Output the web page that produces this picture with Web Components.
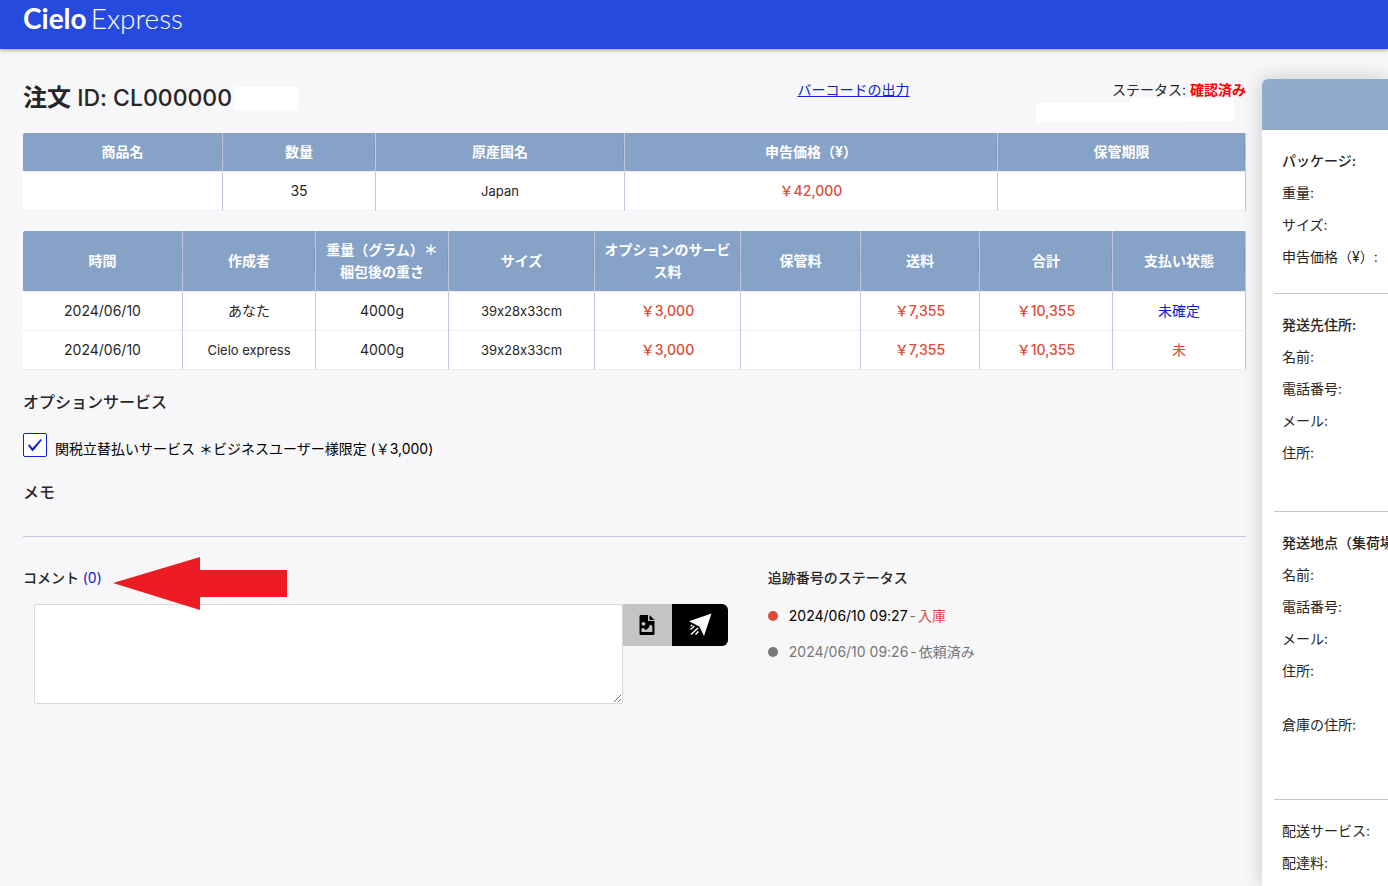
<!DOCTYPE html>
<html lang="ja">
<head>
<meta charset="utf-8">
<meta name="viewport" content="width=device-width, initial-scale=1">
<title>Cielo Express</title>
<style>
  :root {
    --blue: #264add; --link: #1020cc; --red: #dd4b39; --steel: #86a2c7; --line: #c3c4de;
    --text: #262626; --page: #f7f7f9;
  }
  body {
    margin: 0; background: var(--page); color: var(--text);
    font: 14px/22px Inter, "Noto Sans CJK JP", sans-serif;
    font-feature-settings: "calt" 0;
  }
</style>
</head>
<body>
<order-page>
  <app-header slot="header"></app-header>
  <order-heading number="CL000000"></order-heading>
  <data-table id="goods"></data-table>
  <data-table id="quotes"></data-table>
  <service-options>関税立替払いサービス ＊ビジネスユーザー様限定 (￥3,000)</service-options>
  <bottom-area>
    <comment-box count="0"></comment-box>
    <track-status slot="side">
      <track-event active when="2024/06/10 09:27">入庫</track-event>
      <track-event when="2024/06/10 09:26">依頼済み</track-event>
    </track-status>
  </bottom-area>
  <info-panel slot="aside">
    <info-group label="パッケージ:" rows="重量:|サイズ:|申告価格（¥）:"></info-group>
    <info-group label="発送先住所:" rows="名前:|電話番号:|メール:|住所:" extra="value"></info-group>
    <info-group label="発送地点（集荷場" rows="名前:|電話番号:|メール:|住所:||倉庫の住所:" extra="address"></info-group>
    <info-group rows="配送サービス:|配達料:"></info-group>
  </info-panel>
</order-page>
<script>
const tables = {
  goods: {
    widths: [200, 153, 249, 373, 248],
    heads: ['商品名', '数量', '原産国名', '申告価格（¥）', '保管期限'],
    rows: [['', '35', ['latin', 'Japan'], ['money', '￥42,000'], '']]
  },
  quotes: {
    widths: [160, 133, 133, 146, 146, 120, 119, 133, 133],
    heads: ['時間', '作成者', '重量（グラム）＊<br>梱包後の重さ', 'サイズ', 'オプションのサービス料', '保管料', '送料', '合計', '支払い状態'],
    rows: [
      ['2024/06/10', 'あなた', '4000g', ['latin', '39x28x33cm'], ['money', '￥3,000'], '', ['money', '￥7,355'], ['money', '￥10,355'], ['link', '未確定']],
      ['2024/06/10', ['latin', 'Cielo express'], '4000g', ['latin', '39x28x33cm'], ['money', '￥3,000'], '', ['money', '￥7,355'], ['money', '￥10,355'], ['warn', '未']]
    ]
  }
};

const define = (name, html, setup) => {
  const tpl = document.createElement('template');
  tpl.innerHTML = html;
  customElements.define(name, class extends HTMLElement {
    constructor() {
      super();
      this.attachShadow({ mode: 'open' }).append(tpl.content.cloneNode(true));
    }
    connectedCallback() { if (setup) setup(this, this.shadowRoot); }
  });
};

define('order-page', `
<style>
  :host { display: flex; flex-direction: column; min-height: 100vh; overflow-x: clip; }
  .cols { flex: 1; display: grid; grid-template-columns: minmax(0, 1fr) 126px; gap: 16px; padding: 30px 0 0 23px; }
  main { display: flex; flex-direction: column; }
  aside { display: flex; min-width: 0; }
</style>
<slot name="header"></slot>
<div class="cols"><main><slot></slot></main><aside><slot name="aside"></slot></aside></div>`);

define('app-header', `
<style>
  :host { display: block; background: var(--blue); box-shadow: 0 1px 4px rgba(0,0,0,.4); }
  header { height: 49px; padding: 0 23px; }
  a { display: flex; gap: 4px; color: #fff; text-decoration: none; font: 300 28px/36px Lato, sans-serif; }
  b { font-weight: 700; }
</style>
<header><a href="#"><b>Cielo</b><span>Express</span></a></header>`);

define('order-heading', `
<style>
  :host { display: grid; grid-template-columns: 19fr 11fr; height: 54px; }
  h1 { margin: 0; display: flex; align-items: center; height: 38px; font-size: 23px; line-height: 38px; font-weight: 500; white-space: nowrap; }
  h1 b { font-size: 24px; font-weight: 700; }
  .mask { background: #fff; }
  h1 .mask { width: 64px; height: 23px; margin-left: 2px; }
  .right { display: flex; justify-content: space-between; align-items: flex-start; }
  a { color: var(--link); }
  .status { display: flex; flex-direction: column; align-items: flex-end; }
  .status b { color: red; font-weight: 700; }
  .status .mask { width: 198px; height: 24px; margin: -3px 12px 0 0; clip-path: polygon(0 5px, 94px 5px, 94px 0, 100% 0, 100% 23px, 150px 23px, 150px 100%, 0 100%); }
</style>
<h1><span><b>注文</b> ID: <span class="no"></span></span><i class="mask"></i></h1>
<div class="right"><a href="#">バーコードの出力</a>
<div class="status"><div>ステータス: <b>確認済み</b></div><div class="mask"></div></div></div>`,
(el, root) => { root.querySelector('.no').textContent = el.getAttribute('number'); });

define('data-table', `
<style>
  :host { display: block; margin-bottom: 20px; }
  table { width: 100%; table-layout: fixed; border-collapse: separate; border-spacing: 0; background: #fff; border-radius: 2px 2px 0 0; overflow: hidden; }
  th, td { padding: 8px; text-align: center; border-right: 1px solid var(--line); border-bottom: 1px solid #ededf2; height: 22px; }
  th { background: linear-gradient(rgba(0,0,0,.06), rgba(0,0,0,.06)) no-repeat right center / 1px 22px var(--steel); color: #fff; font-weight: 700; }
  .money { color: var(--red); font-weight: 500; }
  .latin { font-size: 13px; }
  .link { color: var(--link); }
  .warn { color: var(--red); }
</style>
<table><colgroup></colgroup><thead><tr></tr></thead><tbody></tbody></table>`,
(el, root) => {
  const { widths, heads, rows } = tables[el.id];
  const total = widths.reduce((a, b) => a + b);
  root.querySelector('colgroup').innerHTML = widths.map(w => `<col style="width:${w / total * 100}%">`).join('');
  root.querySelector('thead tr').innerHTML = heads.map(h => `<th scope="col">${h}</th>`).join('');
  root.querySelector('tbody').innerHTML = rows.map(r => '<tr>' + r.map(c =>
    Array.isArray(c) ? `<td class="${c[0]}">${c[1]}</td>` : `<td>${c}</td>`).join('') + '</tr>').join('');
});

define('service-options', `
<style>
  :host { display: block; border-bottom: 1px solid var(--line); }
  h2 { margin: 0; font-size: 16px; line-height: 24px; font-weight: 500; }
  label { display: flex; align-items: flex-start; gap: 8px; margin: 19px 0 20px; color: #000; }
  label span { padding-top: 5px; }
  input { appearance: none; margin: 0; width: 24px; height: 24px; flex: none; border: 1px solid var(--link); border-radius: 2px; background: #fff; display: grid; place-items: center; }
  input:checked::before { content: ""; width: 14px; height: 12px; background: var(--link); clip-path: polygon(0 54%, 10% 44%, 32% 74%, 91% 0, 100% 8%, 36% 100%, 29% 100%); }
  .memo { height: 32px; }
</style>
<h2>オプションサービス</h2>
<label><input type="checkbox" checked><span><slot></slot></span></label>
<h2>メモ</h2><div class="memo"></div>`);

define('bottom-area', `
<style>
  :host { display: grid; grid-template-columns: 28fr 19fr; gap: 40px; padding-top: 30px; }
</style>
<slot></slot><slot name="side"></slot>`);

define('comment-box', `
<style>
  :host { display: block; position: relative; }
  label { font-weight: 500; } label span { color: var(--link); font-weight: 400; }
  .row { display: flex; align-items: flex-start; padding-left: 11px; margin-top: 15px; }
  textarea { flex: 1; min-width: 0; box-sizing: border-box; height: 100px; margin: 0; padding: 4px 11px; border: 1px solid #d9d9d9; border-radius: 2px; background: #fff; font: inherit; resize: both; }
  button { height: 42px; padding: 0; border: 0; display: grid; place-items: center; }
  .file { width: 49px; background: #c4c4c4; }
  .send { width: 56px; background: #000; border-radius: 0 6px 6px 0; }
  .arrow { position: absolute; left: 90px; top: -10px; }
</style>
<label for="c">コメント <span></span></label>
<div class="row"><textarea id="c"></textarea>
<button class="file" type="button" aria-label="画像を添付"><svg width="16" height="20" viewBox="0 0 16 20"><path fill="#000" d="M1.500 0H9v6h6.500v12.500Q15.500 20 14 20H2Q.5 20 .5 18.500V1.500Q.5 0 1.500 0ZM10.500 0 15.500 5H10.500Z"/><circle cx="4.500" cy="8.800" r="1.900" fill="#c4c4c4"/><path fill="#c4c4c4" d="M2.500 17v-3l2-2 2.500 2 4.500-4.500 1.800 1.800V17Z"/><path stroke="#000" stroke-width="1.400" fill="none" d="m3.500 11.500 3.500 2.800 3-3"/></svg></button>
<button class="send" type="button" aria-label="送信"><svg width="24" height="24" viewBox="0 0 24 24"><path fill="#fff" d="M23.500.500 16 23 11.300 13.600 1 8.300Z"/><path stroke="#fff" stroke-width="1.500" d="M2.500 16.500l4-3.500M3 21.500l7-6.500M7.500 21.500l3-3M2.800 13.200l1.500-1.200"/></svg></button></div>
<svg class="arrow" width="174" height="53" viewBox="0 0 174 53" aria-hidden="true"><path fill="#ed1c24" d="M0 26 87 0V13H174V40H87V53Z"/></svg>`,
(el, root) => { root.querySelector('label span').textContent = `(${el.getAttribute('count')})`; });

define('track-status', `
<style>
  :host { display: block; }
  h3 { margin: 0 0 16px; font-size: 14px; line-height: 22px; font-weight: 500; }
</style>
<h3>追跡番号のステータス</h3><slot></slot>`);

define('track-event', `
<style>
  :host { display: flex; align-items: center; margin-bottom: 14px; color: #777; }
  i { width: 10px; height: 10px; border-radius: 50%; background: #777; margin-right: 11px; }
  :host([active]) i { background: var(--red); }
  :host([active]) time { color: #000; }
  :host([active]) .state { color: var(--red); }
  div { display: flex; gap: 2px; }
</style>
<i></i><div><time></time><span>-</span><span class="state"><slot></slot></span></div>`,
(el, root) => { root.querySelector('time').textContent = el.getAttribute('when'); });

define('info-panel', `
<style>
  :host { display: block; width: 100%; background: #fff; border-radius: 6px 0 0 0; box-shadow: 0 0 20px rgba(0,0,0,.2); }
  header { height: 51px; background: #92abca; border-radius: 6px 0 0 0; }
  .body { padding-left: 12px; }
</style>
<header></header><div class="body"><slot></slot></div>`);

define('info-group', `
<style>
  :host { display: block; padding: 15px 0 20px 8px; border-bottom: 1px solid var(--line); white-space: nowrap; overflow: hidden; }
  :host(:last-child) { border: 0; padding-bottom: 0; }
  :host([extra="value"]) { padding-bottom: 42px; }
  :host([extra="address"]) { padding-bottom: 58px; }
  div, h4 { margin: 0; font-size: 14px; line-height: 32px; }
  h4 { font-weight: 500; }
  .blank { height: 22px; }
</style>`,
(el, root) => {
  const label = el.getAttribute('label');
  if (label) root.append(Object.assign(document.createElement('h4'), { textContent: label }));
  for (const t of el.getAttribute('rows').split('|'))
    root.append(Object.assign(document.createElement('div'), { textContent: t, className: t ? '' : 'blank' }));
});
</script>
</body>
</html>
